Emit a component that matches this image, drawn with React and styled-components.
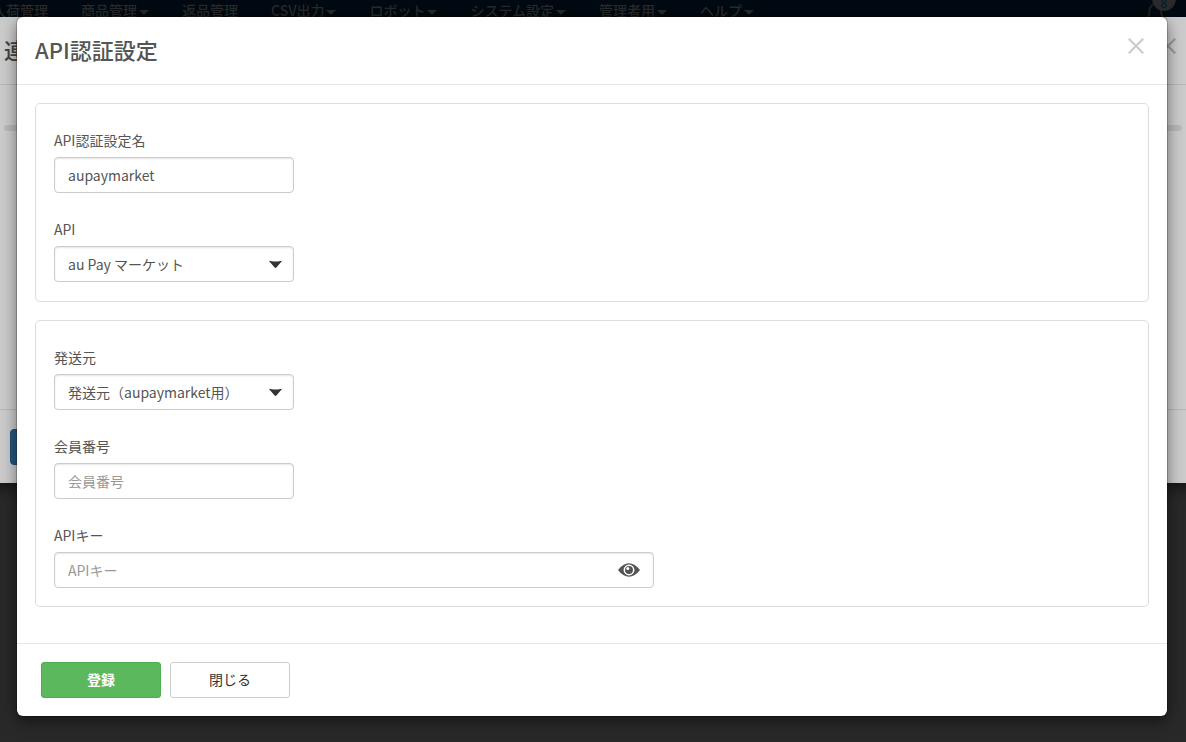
import { useState } from 'react';
import styled, { createGlobalStyle, css } from 'styled-components';

const GlobalStyle = createGlobalStyle`
  * {
    box-sizing: border-box;
  }
  body {
    margin: 0;
    min-height: 100vh;
    background: #292929;
    color: #555;
    font-family: "Noto Sans CJK JP", "Noto Sans", sans-serif;
    font-size: 14px;
    line-height: 22px;
    overflow-x: hidden;
  }
  button, input, select {
    font: inherit;
  }
`

const Page = styled.div`
  position: relative;
  min-height: 100vh;
  overflow: hidden;
`

/* ---- 背面のページ ---- */
const StyleNav = styled.nav`
  display: flex;
  justify-content: space-between;
  height: 50px;
  padding-right: 18px;
  background: #000a12;
`
const NavList = styled.ul`
  display: flex;
  gap: 33px;
  margin: 0 0 0 -8px;
  padding: 0;
  list-style: none;
`
const NavLink = styled.a`
  display: flex;
  align-items: center;
  gap: 2px;
  height: 20px;
  color: #2b2b2b;
  font-weight: 500;
  text-decoration: none;
  white-space: nowrap;
`
const NavCaret = styled.svg`
  width: 10px;
  height: 5px;
  margin-top: 4px;
  fill: #2b2b2b;
`
const Notice = styled.div`
  position: relative;
  width: 24px;
`
const NoticeBell = styled.svg`
  position: absolute;
  top: 3px;
  left: 2px;
  width: 20px;
  height: 22px;
  fill: none;
  stroke: #222;
  stroke-width: 2;
`
const NoticeBadge = styled.span`
  position: absolute;
  top: -13px;
  right: -8px;
  width: 24px;
  height: 24px;
  padding-top: 5px;
  border-radius: 50%;
  background: #2b2b2b;
  color: #061d30;
  font-size: 12px;
  font-weight: 500;
  text-align: center;
`

const BackDialog = styled.section`
  position: absolute;
  top: 17px;
  left: -14px;
  right: -14px;
  background: #cbcbcb;
  box-shadow: 0 5px 15px rgba(0, 0, 0, 0.5);
`
const BackHeader = styled.header`
  display: flex;
  justify-content: space-between;
  height: 68px;
  padding: 16px 24px 0 18px;
  border-bottom: 1px solid #b6b6b6;
`
const BackBody = styled.div`
  height: 324px;
  padding: 40px 18px 0;
`
const BackBar = styled.div`
  height: 6px;
  border-radius: 3px;
  background: #b9b9b9;
`
const BackFooter = styled.footer`
  padding: 19px 24px 18px;
  border-top: 1px solid #b6b6b6;
`
const BackButton = styled.button`
  display: block;
  width: 120px;
  height: 36px;
  border: 1px solid #1f4c73;
  border-radius: 4px;
  background: #25587f;
`

/* ---- ダイアログ ---- */
const Overlay = styled.div`
  position: absolute;
  inset: 0;
  padding: 17px 19px 26px 17px;
`
const Dialog = styled.section`
  border-radius: 6px;
  background: #fff;
  box-shadow: 0 0 0 1px rgba(0, 0, 0, 0.2), 0 5px 15px rgba(0, 0, 0, 0.5);
`
const DialogHeader = styled.header`
  display: flex;
  justify-content: space-between;
  height: 68px;
  padding: 16px 23px 0 18px;
  border-bottom: 1px solid #e5e5e5;
`
const Title = styled.h1`
  margin: 0;
  color: ${({ $dim }) => ($dim ? '#444' : '#555')};
  font-size: 22px;
  font-weight: 500;
  line-height: 32px;
`
const CloseButton = styled.button`
  align-self: flex-start;
  width: 16px;
  height: 16px;
  margin-top: 5px;
  padding: 0;
  border: 0;
  background: none;
  color: ${({ $dim }) => ($dim ? '#9b9b9b' : '#ccc')};
  cursor: pointer;

  svg {
    display: block;
  }
`
const DialogBody = styled.form`
  display: flex;
  flex-direction: column;
  gap: 18px;
  padding: 18px 18px 36px;
`
const Panel = styled.section`
  display: flex;
  flex-direction: column;
  gap: 25px;
  min-height: 199px;
  padding: 25px 18px 18px;
  border: 1px solid #ddd;
  border-radius: 5px;
`
const StyleField = styled.div`
  display: flex;
  flex-direction: column;
  gap: 6px;
  max-width: ${({ $wide }) => ($wide ? '600px' : '240px')};
`
const Control = styled.div`
  position: relative;
`
const controlStyle = css`
  display: block;
  width: 100%;
  height: 36px;
  margin: 0;
  padding: 0 13px;
  border: 1px solid #ccc;
  border-radius: 4px;
  background: #fff;
  box-shadow: inset 0 1px 2px rgba(0, 0, 0, 0.1);
  color: #555;
  outline: none;
`
const Input = styled.input`
  ${controlStyle}

  &::placeholder {
    color: #999;
    opacity: 1;
  }
`
const Select = styled.select`
  ${controlStyle}
  appearance: none;
`
const SelectArrow = styled.svg`
  position: absolute;
  top: 14px;
  right: 11px;
  width: 15px;
  height: 9px;
  fill: #333;
  pointer-events: none;
`
const EyeButton = styled.button`
  position: absolute;
  top: 10px;
  right: 13px;
  width: 24px;
  height: 16px;
  padding: 0;
  border: 0;
  background: none;
  cursor: pointer;

  svg {
    display: block;
  }
`
const DialogFooter = styled.footer`
  display: flex;
  gap: 9px;
  padding: 18px 24px;
  border-top: 1px solid #e5e5e5;
`
const Button = styled.button`
  width: 120px;
  height: 36px;
  padding: 0 0 2px;
  border: 1px solid ${({ $primary }) => ($primary ? '#4cae4c' : '#ccc')};
  border-radius: 3px;
  background: ${({ $primary }) => ($primary ? '#5cb85c' : '#fff')};
  color: ${({ $primary }) => ($primary ? '#fff' : '#333')};
  font-weight: ${({ $primary }) => ($primary ? 700 : 400)};
  cursor: pointer;
`

const MENUS = [
  { name: '入荷管理' },
  { name: '商品管理', caret: true },
  { name: '返品管理' },
  { name: 'CSV出力', caret: true },
  { name: 'ロボット', caret: true },
  { name: 'システム設定', caret: true },
  { name: '管理者用', caret: true },
  { name: 'ヘルプ', caret: true },
];

function Close({ dim }) {
  return (
    <CloseButton type="button" aria-label="閉じる" $dim={dim}>
      <svg width="16" height="16" viewBox="0 0 16 16" stroke="currentColor" strokeWidth="2.2">
        <path d="M0.7 0.7 15.3 15.3M15.3 0.7 0.7 15.3" />
      </svg>
    </CloseButton>
  );
}

function Field({ id, label, wide, children }) {
  return (
    <StyleField $wide={wide}>
      <label htmlFor={id}>{label}</label>
      <Control>{children}</Control>
    </StyleField>
  );
}

function SelectBox({ id, options }) {
  return (
    <>
      <Select id={id}>
        {options.map((option) => <option key={option}>{option}</option>)}
      </Select>
      <SelectArrow viewBox="0 0 15 9">
        <path d="M0.8 0.8C4.5 1.7 10.5 1.7 14.2 0.8L8.4 7.5Q7.5 8.4 6.6 7.5Z" />
      </SelectArrow>
    </>
  );
}

function Nav() {
  return (
    <StyleNav>
      <NavList>
        {MENUS.map(({ name, caret }) => (
          <li key={name}>
            <NavLink href="#">
              {name}
              {caret && <NavCaret viewBox="0 0 10 5"><path d="M0 0H10L5 5Z" /></NavCaret>}
            </NavLink>
          </li>
        ))}
      </NavList>
      <Notice>
        <NoticeBell viewBox="0 0 20 22">
          <path d="M1 17C4 14 3 10 3.5 7C4 3 7 1 10 1S15 4 15 8S16 14 19 17Z" />
        </NoticeBell>
        <NoticeBadge>8</NoticeBadge>
      </Notice>
    </StyleNav>
  );
}

export default function App() {
  const [name, setName] = useState('aupaymarket');
  const [showKey, setShowKey] = useState(false);

  return (
    <Page>
      <GlobalStyle />
      <Nav />
      <BackDialog aria-hidden="true">
        <BackHeader>
          <Title as="h2" $dim>連携</Title>
          <Close dim />
        </BackHeader>
        <BackBody><BackBar /></BackBody>
        <BackFooter><BackButton type="button" /></BackFooter>
      </BackDialog>

      <Overlay>
        <Dialog role="dialog" aria-labelledby="dialog-title">
          <DialogHeader>
            <Title id="dialog-title">API認証設定</Title>
            <Close />
          </DialogHeader>
          <DialogBody id="api-form" onSubmit={(e) => e.preventDefault()}>
            <Panel>
              <Field id="name" label="API認証設定名">
                <Input id="name" value={name} onChange={(e) => setName(e.target.value)} />
              </Field>
              <Field id="api" label="API">
                <SelectBox id="api" options={['au Pay マーケット']} />
              </Field>
            </Panel>
            <Panel>
              <Field id="sender" label="発送元">
                <SelectBox id="sender" options={['発送元（aupaymarket用）']} />
              </Field>
              <Field id="member" label="会員番号">
                <Input id="member" placeholder="会員番号" />
              </Field>
              <Field id="api-key" label="APIキー" wide>
                <Input id="api-key" type={showKey ? 'text' : 'password'} placeholder="APIキー" />
                <EyeButton type="button" aria-label="表示" onClick={() => setShowKey(!showKey)}>
                  <svg width="24" height="16" viewBox="0 0 24 16">
                    <path fill="#555" d="M1 8C4.5 3.5 8 1.2 12 1.2S19.5 3.5 23 8C19.5 12.5 16 14.8 12 14.8S4.5 12.5 1 8Z" />
                    <circle cx="12" cy="8" r="4.7" fill="#555" stroke="#fff" strokeWidth="1.5" />
                    <circle cx="10.8" cy="6.4" r="1.5" fill="#fff" />
                  </svg>
                </EyeButton>
              </Field>
            </Panel>
          </DialogBody>
          <DialogFooter>
            <Button type="submit" form="api-form" $primary>登録</Button>
            <Button type="button">閉じる</Button>
          </DialogFooter>
        </Dialog>
      </Overlay>
    </Page>
  );
}
